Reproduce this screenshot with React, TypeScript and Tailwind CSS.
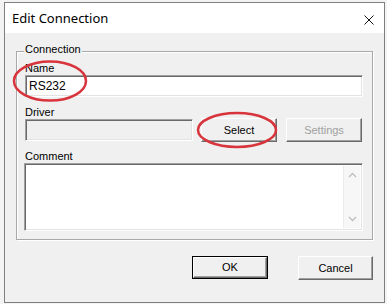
const ui = "font-['Liberation_Sans',Arial,sans-serif] text-[11px] text-black";

function ClassicButton({
  label,
  width,
  disabled,
  isDefault,
}: {
  label: string;
  width: string;
  disabled?: boolean;
  isDefault?: boolean;
}) {
  const face = (
    <div
      className={`h-full w-full flex items-center justify-center bg-[#f0f0f0] border-t border-l border-t-white border-l-white border-b border-r border-b-[#696969] border-r-[#696969] shadow-[inset_-1px_-1px_0_#a0a0a0] ${
        disabled ? "text-[#a0a0a0]" : "text-black"
      }`}
    >
      {label}
    </div>
  );
  if (isDefault) {
    return <div className={`${width} h-[23px] border border-black`}>{face}</div>;
  }
  return <div className={`${width} h-[24px]`}>{face}</div>;
}

function Sunken({ className, children }: { className: string; children?: React.ReactNode }) {
  return (
    <div
      className={`border-t border-l border-t-[#a0a0a0] border-l-[#a0a0a0] border-b border-r border-b-white border-r-white shadow-[inset_1px_1px_0_#696969,inset_-1px_-1px_0_#e3e3e3] ${className}`}
    >
      {children}
    </div>
  );
}

export default function App() {
  return (
    <div className={`w-[387px] h-[304px] bg-[#f3f3f3] relative overflow-hidden pl-[4px] pt-[2px] ${ui}`}>
      <div className="w-[381px] h-[301px] border border-[#7f7f7f] flex flex-col bg-[#f0f0f0]">
        {/* title bar */}
        <div className="h-[30px] shrink-0 bg-white flex items-center justify-between pl-[7px] pr-[10px]">
          <span className="font-['Noto_Sans',sans-serif] text-[13px] text-black leading-none pt-[1px]">
            Edit Connection
          </span>
          <svg width="10" height="10" viewBox="0 0 10 10" className="mt-[3px]">
            <path d="M0.5 0.5 L9.5 9.5 M9.5 0.5 L0.5 9.5" stroke="#111" strokeWidth="1" />
          </svg>
        </div>

        {/* body */}
        <div className="flex-1 pl-[11px] pt-[18px]">
          <div className="relative w-[357px] border border-[#a9a9a9] shadow-[inset_1px_1px_0_#fff,1px_1px_0_#fff] pl-[8px] pt-[10px] pb-[8px]">
            <span className="absolute left-[7px] top-[-9px] px-px leading-[13px] bg-[#f0f0f0]">
              Connection
            </span>

            <div className="leading-[13px]">Name</div>
            <Sunken className="w-[338px] h-[22px] bg-white flex items-center pl-[3px] text-[12px]">
              RS232
            </Sunken>

            <div className="leading-[12px] mt-[9px]">Driver</div>
            <div className="h-[24px] flex items-center">
              <Sunken className="w-[168px] h-[22px] bg-[#f0f0f0]" />
              <div className="ml-[8px]">
                <ClassicButton label="Select" width="w-[76px]" />
              </div>
              <div className="ml-[9px]">
                <ClassicButton label="Settings" width="w-[76px]" disabled />
              </div>
            </div>

            <div className="leading-[13px] mt-[8px]">Comment</div>
            <Sunken className="ml-[-1px] w-[339px] h-[68px] bg-white flex justify-end p-[2px]">
              <div className="w-[17px] h-full bg-[#f7f7f7] border-l border-[#ececec] flex flex-col items-center justify-between py-[6px]">
                <svg width="9" height="6" viewBox="0 0 9 6">
                  <path d="M1 5 L4.5 1.5 L8 5" stroke="#bdbdbd" strokeWidth="1.3" fill="none" />
                </svg>
                <svg width="9" height="6" viewBox="0 0 9 6">
                  <path d="M1 1 L4.5 4.5 L8 1" stroke="#bdbdbd" strokeWidth="1.3" fill="none" />
                </svg>
              </div>
            </Sunken>
          </div>

          <div className="flex mt-[16px] ml-[176px] gap-[30px]">
            <ClassicButton label="OK" width="w-[76px]" isDefault />
            <ClassicButton label="Cancel" width="w-[75px]" />
          </div>
        </div>
      </div>

      {/* red annotation ellipses */}
      <svg className="absolute inset-0 pointer-events-none" width="387" height="304">
        <ellipse cx="50" cy="81" rx="36" ry="19.5" fill="none" stroke="#d8343c" strokeWidth="2.5" />
        <ellipse cx="237" cy="130" rx="39" ry="17" fill="none" stroke="#d8343c" strokeWidth="2.5" />
      </svg>
    </div>
  );
}
